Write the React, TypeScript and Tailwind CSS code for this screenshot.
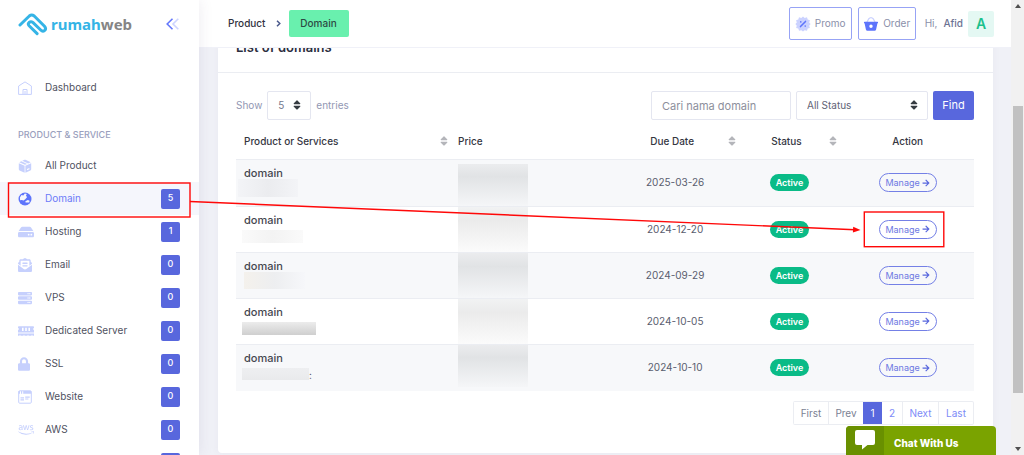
import type { ReactNode } from "react";
import { FaArrowRight, FaAws, FaEnvelopeOpenText, FaHdd, FaLock, FaMemory, FaServer, FaSort } from "react-icons/fa";

function HomeIcon() {
  return (
    <svg viewBox="0 0 14 14" className="h-3.5 w-3.5" fill="none" stroke="currentColor" strokeWidth="1">
      <path d="M.6 13.4V5L7 .9 13.4 5v8.400z" strokeLinejoin="round" />
      <path d="M5 13.200V8.500h4v4.700M7 10v3.200" />
    </svg>
  );
}

function BoxIcon() {
  return (
    <svg viewBox="0 0 14 14" className="h-3.5 w-3.5" fill="currentColor">
      <path d="M.8 4.200 6.600 6.700v7L1.600 11.500Q.8 11.100.8 10.300z" />
      <path d="M13.200 4.200 7.400 6.700v7l5-2.200q.8-.4.8-1.200zM9 9.900l2.400-1v1.300L9 11.200z" fillRule="evenodd" />
      <path d="M1.300 3.200 3.400 2.200 9.100 4.900 7 5.800zM4.300 1.800 6.500.8q.5-.2 1 0L12.700 3.200 10.100 4.500z" />
    </svg>
  );
}

function GlobeIcon() {
  return (
    <svg viewBox="0 0 14 14" className="h-3.5 w-3.5">
      <circle cx="7" cy="7" r="6.500" fill="currentColor" />
      <path d="M6.800 1.600 8.800 1.900 8 3.600 9 5.200 7.200 7.200 5.600 8.400 3.800 8 2.100 8.200 1.900 5.500 3.500 3.100 5.300 3.500z" fill="#f5f6fc" />
      <path d="M7.400 9.300 9.800 8 11.600 8.700 11.200 10.600 7.600 10.600z" fill="#f5f6fc" />
    </svg>
  );
}

function WindowIcon() {
  return (
    <svg viewBox="0 0 14 14" className="h-3.5 w-3.5" fill="none" stroke="currentColor">
      <rect x=".7" y=".8" width="12.600" height="12.400" rx="1" />
      <path d="M.5 2.400h1.500M3 2.400h1.200M5.200 2.400h8" strokeWidth="2.600" />
      <path d="M2.500 7.900h3.500M7.200 7.200h4.500M7.200 9h3.200M2.500 9.800h3.500" strokeWidth="1.200" />
    </svg>
  );
}

function PromoIcon() {
  return (
    <svg viewBox="0 0 16 16" className="h-4 w-4">
      <path
        d="M8 .5 9.700 2 12 1.300l.7 2.200 2.200.7L14.200 6.400 15.600 8l-1.400 1.700.7 2.200-2.200.7-.7 2.200-2.300-.6L8 15.500l-1.700-1.300-2.300.6-.7-2.200-2.200-.7.7-2.200L.4 8l1.400-1.600-.7-2.200 2.200-.7L4 1.300 6.300 2z"
        fill="#cbd2ff"
      />
      <path d="M5.500 10.600 10.500 5.400" stroke="#5d74fb" strokeWidth="1.500" strokeLinecap="round" />
      <circle cx="5.800" cy="5.900" r=".8" fill="#5d74fb" />
      <circle cx="10.200" cy="10.100" r=".8" fill="#5d74fb" />
    </svg>
  );
}

function BasketIcon() {
  return (
    <svg viewBox="0 0 16 16" className="h-4 w-4">
      <path d="M3.800 6.500 5.600 3Q8 .2 10.400 3l1.800 3.500" fill="none" stroke="#cbd2ff" strokeWidth="1.300" />
      <path
        d="M1.600 5.800h12.800q.7 0 .7.700t-.7.900L13.100 13.500q-.3 1.200-1.500 1.200H4.400q-1.200 0-1.500-1.200L1.600 7.400Q.9 7.200.9 6.500t.7-.7zM8 8.600a1.700 1.700 0 1 0 0 3.400 1.700 1.700 0 1 0 0-3.400z"
        fill="#5d74fb"
        fillRule="evenodd"
      />
    </svg>
  );
}

function Logo() {
  return (
    <a href="#home" className="flex items-center gap-[3px]" aria-label="rumahweb">
      <svg viewBox="0 0 30 24" className="h-6 w-[30px]" fill="none" stroke="#35b4e6" strokeWidth="3" strokeLinecap="round" strokeLinejoin="round">
        <path d="M2 13 11.300 4Q13.700 2 16.200 4L26.500 14.300q2 2.400.2 4-2 1.700-4-.3L14.800 10.400Q12.900 9 11.100 10.500q-1.600 1.600 0 3.300l8 7.800" />
      </svg>
      <span className="font-['Noto_Sans',sans-serif] text-[15px] leading-5 font-bold text-[#35b4e6]">
        rumah<span className="text-[#858585]">web</span>
      </span>
    </a>
  );
}

type Item = { label: string; icon: ReactNode; count?: number; active?: boolean };

const items: Item[] = [
  { label: "All Product", icon: <BoxIcon /> },
  { label: "Domain", icon: <GlobeIcon />, count: 5, active: true },
  { label: "Hosting", icon: <FaHdd className="h-4 w-4" />, count: 1 },
  { label: "Email", icon: <FaEnvelopeOpenText className="h-3.5 w-3.5" />, count: 0 },
  { label: "VPS", icon: <FaServer className="h-3.5 w-3.5" />, count: 0 },
  { label: "Dedicated Server", icon: <FaMemory className="h-4 w-4" />, count: 0 },
  { label: "SSL", icon: <FaLock className="h-3.5 w-3" />, count: 0 },
  { label: "Website", icon: <WindowIcon />, count: 0 },
  { label: "AWS", icon: <FaAws className="h-4 w-4" />, count: 0 },
];

const rowClass = "flex h-[33px] items-center pr-[19px] pl-[18px] ";
const countClass = "flex h-5 w-[19px] justify-center rounded-xs bg-[#5867dd] text-[9px] leading-[18px] font-medium text-white";

function NavItem({ label, icon, count, active }: Item) {
  return (
    <li>
      <a href={"#" + label} className={rowClass + "text-[10px] " + (active ? "bg-[#f5f6fc] text-[#6c7bf8]" : "text-[#50525f]")}>
        <span className={"flex w-[27px] shrink-0 items-center " + (active ? "text-[#5d74fb]" : "text-[#c6d0fd]")}>{icon}</span>
        <span className="flex-1 whitespace-nowrap">{label}</span>
        {count !== undefined && <span className={countClass}>{count}</span>}
      </a>
    </li>
  );
}

function Sidebar() {
  return (
    <aside className="z-10 flex w-[199px] shrink-0 flex-col bg-white shadow-[0_0_14px_rgba(82,63,105,0.10)]">
      <div className="flex h-12 shrink-0 items-center justify-between pr-5 pl-[18px]">
        <Logo />
        <button type="button" aria-label="Collapse menu">
          <svg viewBox="0 0 13 12" className="h-3 w-[13px]" fill="none" strokeWidth="1.600">
            <path d="M6.500.8 1.200 6l5.300 5.200" stroke="#6478fb" />
            <path d="M12.300.8 7 6l5.300 5.200" stroke="#cdd4ff" />
          </svg>
        </button>
      </div>
      <nav className="pt-[23px]">
        <ul>
          <NavItem label="Dashboard" icon={<HomeIcon />} />
        </ul>
        <h2 className="flex h-[45px] items-end pb-2 pl-[18px] text-[9px] leading-[12px] font-medium text-[#9aa0bd]">PRODUCT &amp; SERVICE</h2>
        <ul>
          {items.map((item) => (
            <NavItem key={item.label} {...item} />
          ))}
          <li className={rowClass + "justify-end"}>
            <span className={countClass} />
          </li>
        </ul>
      </nav>
    </aside>
  );
}

function Header() {
  return (
    <header className="z-[5] flex h-12 shrink-0 items-center border-b border-[#f0f1f8] bg-white pr-[17px] pl-[29px] text-[10px]">
      <nav className="flex items-center gap-2" aria-label="Breadcrumb">
        <a href="#product" className="font-medium text-[#2f3140]">Product</a>
        <svg viewBox="0 0 5 7" className="ml-0.5 h-[7px] w-[5px]" fill="none" stroke="#4c5a8c" strokeWidth="1.500">
          <path d="M1 .8 3.800 3.500 1 6.200" />
        </svg>
        <a href="#domain" className="flex h-[27px] w-[60px] items-center justify-center rounded-xs bg-[#69f0ae] font-medium text-[#2c4a44]">Domain</a>
      </nav>
      <div className="ml-auto flex items-center text-[#8a8fa9]">
        <button type="button" className="flex h-[33px] w-[63px] items-center justify-center gap-1 rounded-xs border border-[#97a3f5]">
          <PromoIcon />
          Promo
        </button>
        <button type="button" className="ml-1.5 flex h-[33px] w-[58px] items-center justify-center gap-1 rounded-xs border border-[#97a3f5]">
          <BasketIcon />
          Order
        </button>
        <span className="ml-[9px]">Hi,</span>
        <span className="ml-1.5 font-medium text-[#6c7293]">Afid</span>
        <span className="ml-[5px] flex h-[26px] w-[26px] items-center justify-center rounded-xs bg-[#e4f8f3] text-[14px] font-semibold text-[#1bc08c]">A</span>
      </div>
    </header>
  );
}

const rows = [
  { due: "2025-03-26", mask: "-ml-1.5 h-[18px] w-[60px] bg-linear-to-r from-[#f3f4f7] via-[#ebecef] to-[#f3f4f7]", price: "top-1 bottom-0" },
  { due: "2024-12-20", mask: "-ml-0.5 mt-1 h-[13px] w-[61px] bg-linear-to-r from-[#fafafa] via-[#f3f3f3] to-[#fafafa]", price: "inset-y-0" },
  { due: "2024-09-29", mask: "h-[17px] w-[61px] bg-linear-to-r from-[#f4f1ec] via-[#edeef0] to-[#f6f7fa]", price: "inset-y-0" },
  { due: "2024-10-05", mask: "-ml-0.5 mt-1 h-[13px] w-[74px] bg-linear-to-b from-[#ececec] to-[#cfcfcf]", price: "inset-y-0" },
  { due: "2024-10-10", mask: "-ml-0.5 mt-1 h-3 w-[67px] bg-linear-to-b from-[#eeeff1] to-[#e9eaec]", price: "top-0 bottom-1", tail: ":" },
];

function SortIcon({ className }: { className: string }) {
  return <FaSort className={"absolute top-1/2 h-3 w-2 -translate-y-1/2 text-[#b4b5ba] " + className} />;
}

function DomainTable() {
  return (
    <table className="mt-1 h-[267px] w-full table-fixed border-collapse text-[10px] text-[#595d6e]">
      <colgroup>
        <col className="w-[29%]" />
        <col className="w-[22%]" />
        <col className="w-[17%]" />
        <col className="w-[14%]" />
        <col className="w-[18%]" />
      </colgroup>
      <thead className="text-[#34363f]">
        <tr className="h-[35px]">
          <th className="relative px-2 text-left font-medium">
            Product or Services
            <SortIcon className="right-0.5" />
          </th>
          <th className="px-2 text-left font-medium">Price</th>
          <th className="relative pr-1.5 text-center font-medium">
            Due Date
            <SortIcon className="right-0.5" />
          </th>
          <th className="relative pr-1.5 text-center font-medium">
            Status
            <SortIcon className="right-1" />
          </th>
          <th className="text-center font-medium">Action</th>
        </tr>
      </thead>
      <tbody>
        {rows.map((row, i) => (
          <tr key={row.due} className="border-t border-[#ebedf2] odd:bg-[#f7f8fa]">
            <td className="px-2 pt-1.5 align-top">
              <div className="h-[13px] text-[11px] leading-[14px] font-medium text-[#44464f]">domain</div>
              <div className="flex">
                <div className={row.mask} />
                {row.tail && <span className="pt-1 leading-[14px]">{row.tail}</span>}
              </div>
            </td>
            <td className="relative">
              <div
                className={
                  "absolute left-2 w-[70px] bg-linear-to-b via-30% " +
                  (i % 2 === 0 ? "from-[#ebecee] via-[#e1e3e5] to-[#f5f6f8] " : "from-[#f1f2f3] via-[#ebebeb] to-[#fbfbfb] ") +
                  row.price
                }
              />
            </td>
            <td className="text-center">{row.due}</td>
            <td className="text-center">
              <span className="inline-flex h-[17px] w-[39px] items-center justify-center rounded-full bg-[#0abb87] text-[9px] font-semibold text-white">Active</span>
            </td>
            <td className="text-center">
              <button type="button" className="inline-flex h-[19px] w-[58px] items-center justify-center gap-0.5 rounded-full border border-[#7480e6] text-[9px] text-[#6d79e2]">
                Manage
                <FaArrowRight className="h-2 w-2 text-[#5867dd]" />
              </button>
            </td>
          </tr>
        ))}
      </tbody>
    </table>
  );
}

function Toolbar() {
  const field = "h-[29px] rounded-xs border border-[#e4e6f0] bg-white ";
  return (
    <form className="flex items-center text-[10px] text-[#9297b3]" onSubmit={(e) => e.preventDefault()}>
      <label htmlFor="entries">Show</label>
      <span className="relative mx-[5px] flex">
        <select id="entries" className={field + "w-11 appearance-none pl-2.5 text-[#74788d]"}>
          <option>5</option>
          <option>10</option>
        </select>
        <FaSort className="pointer-events-none absolute top-2 right-2.5 h-3 w-2 text-[#343a40]" />
      </span>
      <label htmlFor="entries">entries</label>
      <input aria-label="Cari nama domain" placeholder="Cari nama domain" className={field + "ml-auto w-[140px] px-2.5 text-[11px] placeholder:text-[#8d8f9c]"} />
      <span className="relative ml-[5px] flex">
        <select aria-label="Status" className={field + "w-[132px] appearance-none pl-2.5 text-[#5f6375]"}>
          <option>All Status</option>
          <option>Active</option>
        </select>
        <FaSort className="pointer-events-none absolute top-2 right-2.5 h-3 w-2 text-[#343a40]" />
      </span>
      <button type="submit" className="ml-[5px] h-[29px] w-[41px] rounded-xs bg-[#5867dd] text-[11px] text-white">Find</button>
    </form>
  );
}

function Pagination() {
  const cell = "flex h-[22px] items-center justify-center border-l border-[#ebedf2] ";
  return (
    <nav aria-label="Pages" className="mt-2.5 flex justify-end text-[10px] text-[#7d8bf7]">
      <div className="flex overflow-hidden rounded-xs border border-l-0 border-[#ebedf2]">
        <a href="#first" className={cell + "w-[35px] text-[#7b7f93]"}>First</a>
        <a href="#prev" className={cell + "w-[35px] text-[#7b7f93]"}>Prev</a>
        <a href="#1" className="flex h-[22px] w-[19px] items-center justify-center bg-[#5867dd] text-white">1</a>
        <a href="#2" className="flex h-[22px] w-5 items-center justify-center">2</a>
        <a href="#next" className={cell + "w-9"}>Next</a>
        <a href="#last" className={cell + "w-[35px]"}>Last</a>
      </div>
    </nav>
  );
}

function ChatWidget() {
  return (
    <button type="button" className="absolute right-7 bottom-0 z-20 flex h-[29px] w-[150px] overflow-hidden rounded-t bg-[#7aa300] text-[10px] font-extrabold text-white">
      <span className="flex h-full w-[38px] justify-center bg-[#699000] pt-1">
        <svg viewBox="0 0 20 20" className="h-5 w-5" fill="#fff">
          <path d="M2 0h16q2 0 2 2v11q0 2-2 2H12.500L7 19.500V15H2q-2 0-2-2V2Q0 0 2 0z" />
        </svg>
      </span>
      <span className="flex h-full flex-1 items-center pt-1.5 pl-2.5">Chat With Us</span>
    </button>
  );
}

function Scrollbar() {
  return (
    <div className="flex w-[13px] shrink-0 flex-col items-center justify-between bg-[#f1f1f1] py-1" aria-hidden="true">
      <svg viewBox="0 0 6 4" className="h-1 w-1.5" fill="#505050"><path d="M0 4 3 0l3 4z" /></svg>
      <div className="mt-11 w-2.5 basis-[287px] bg-[#c1c1c1]" />
      <svg viewBox="0 0 6 4" className="h-1 w-1.5" fill="#505050"><path d="M0 0h6L3 4z" /></svg>
    </div>
  );
}

function Callouts() {
  return (
    <svg className="pointer-events-none absolute top-0 left-0 z-30 h-[455px] w-[1024px]" viewBox="0 0 1024 455" fill="none" stroke="#ff0808" strokeWidth="1.400" aria-hidden="true">
      <rect x="8.500" y="183" width="181.500" height="34" />
      <rect x="864.300" y="212" width="79.500" height="34.700" />
      <path d="M190 201.500 855 229.700" />
      <path d="M860.500 229.900 853.200 226.800 852.900 232.600z" fill="#ff0808" stroke="none" />
    </svg>
  );
}

export default function App() {
  return (
    <div className="relative flex h-screen overflow-hidden bg-white font-['Inter',sans-serif]">
      <Sidebar />
      <div className="flex min-w-0 flex-1 flex-col bg-[#f0f1f7]">
        <Header />
        <main className="min-h-0 flex-1 overflow-hidden pr-[18px] pl-[19px]">
          <section className="-mt-6 rounded bg-white pb-7 shadow-[0_0_8px_rgba(82,63,105,0.05)]">
            <h1 className="flex h-[49px] items-center border-b border-[#ebedf2] pl-[18px] text-[13px] font-semibold text-[#2c2e3e]">List of domains</h1>
            <div className="pt-[18px] pr-[19px] pl-[18px]">
              <Toolbar />
              <DomainTable />
              <Pagination />
            </div>
          </section>
        </main>
      </div>
      <Scrollbar />
      <ChatWidget />
      <Callouts />
    </div>
  );
}
